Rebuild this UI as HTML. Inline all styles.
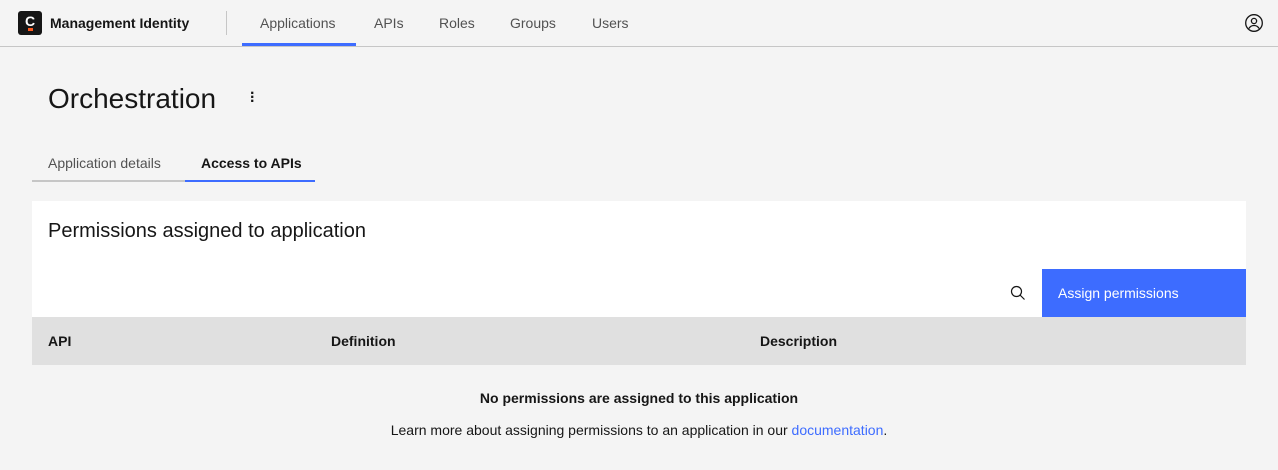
<!DOCTYPE html>
<html><head><style>
*{margin:0;padding:0;box-sizing:border-box}
body{width:1278px;height:470px;background:#f4f4f4;font-family:"Liberation Sans",sans-serif;color:#161616;position:relative;overflow:hidden}
.a{position:absolute;white-space:nowrap}
</style></head><body>
<div class="a" style="left:0;top:46px;width:1278px;height:1px;background:#c6c6c6"></div>
<div class="a" style="left:18px;top:11px;width:24px;height:24px;background:#161616;border-radius:3px;color:#fff;font-weight:bold;font-size:14px;text-align:center;line-height:21px">C</div>
<div class="a" style="left:28px;top:28px;width:5px;height:3px;background:#ff5a1f"></div>
<div class="a" style="left:50px;top:15px;font-size:14px;font-weight:bold">Management Identity</div>
<div class="a" style="left:226px;top:11px;width:1px;height:24px;background:#c6c6c6"></div>
<div class="a" style="left:260px;top:15px;font-size:14px;color:#525252">Applications</div>
<div class="a" style="left:242px;top:43px;width:114px;height:3px;background:#3d6cff"></div>
<div class="a" style="left:374px;top:15px;font-size:14px;color:#525252">APIs</div>
<div class="a" style="left:439px;top:15px;font-size:14px;color:#525252">Roles</div>
<div class="a" style="left:510px;top:15px;font-size:14px;color:#525252">Groups</div>
<div class="a" style="left:592px;top:15px;font-size:14px;color:#525252">Users</div>
<svg class="a" style="left:1244px;top:13px" width="20" height="20" viewBox="0 0 20 20" fill="none" stroke="#161616" stroke-width="1.3"><circle cx="10" cy="10" r="8.3"/><circle cx="10" cy="8" r="2.6"/><path d="M5 15.5c1-2 3-3 5-3s4 1 5 3"/></svg>
<div class="a" style="left:48px;top:83px;font-size:28px;color:#161616">Orchestration</div>
<div class="a" style="left:250px;top:92px;font-size:16px;line-height:4px;font-weight:bold">·<br>·<br>·</div>
<div class="a" style="left:48px;top:155px;font-size:14px;color:#525252">Application details</div>
<div class="a" style="left:201px;top:155px;font-size:14px;font-weight:bold">Access to APIs</div>
<div class="a" style="left:32px;top:180px;width:153px;height:2px;background:#c6c6c6"></div>
<div class="a" style="left:185px;top:180px;width:130px;height:2px;background:#3d6cff"></div>
<div class="a" style="left:32px;top:201px;width:1214px;height:116px;background:#fff"></div>
<div class="a" style="left:48px;top:220px;font-size:20px">Permissions assigned to application</div>
<svg class="a" style="left:1010px;top:285px" width="16" height="16" viewBox="0 0 16 16" fill="none" stroke="#161616" stroke-width="1.2"><circle cx="6.5" cy="6.5" r="5"/><path d="M10 10l4.5 4.5"/></svg>
<div class="a" style="left:1042px;top:269px;width:204px;height:48px;background:#3d6cff;color:#fff;font-size:14px;padding:16px 16px">Assign permissions</div>
<div class="a" style="left:32px;top:317px;width:1214px;height:48px;background:#e0e0e0"></div>
<div class="a" style="left:48px;top:333px;font-size:14px;font-weight:bold">API</div>
<div class="a" style="left:331px;top:333px;font-size:14px;font-weight:bold">Definition</div>
<div class="a" style="left:760px;top:333px;font-size:14px;font-weight:bold">Description</div>
<div class="a" style="left:0;width:1278px;text-align:center;top:390px;font-size:14px;font-weight:bold">No permissions are assigned to this application</div>
<div class="a" style="left:0;width:1278px;text-align:center;top:422px;font-size:14px">Learn more about assigning permissions to an application in our <span style="color:#3d6cff">documentation</span>.</div>
</body></html>
